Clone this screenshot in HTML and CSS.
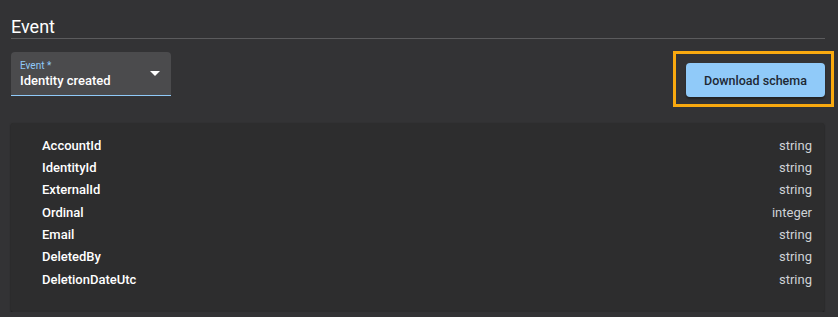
FILE: index.html
```html
<!DOCTYPE html>
<html>
<head>
<meta charset="utf-8">
<link rel="stylesheet" href="styles.css">
</head>
<body>
<div class="page">
  <h2 class="title">Event</h2>
  <div class="divider"></div>
  <div class="toolbar">
    <div class="select">
      <div class="select-text">
        <div class="select-label">Event *</div>
        <div class="select-value">Identity created</div>
      </div>
      <span class="arrow"></span>
    </div>
    <div class="btn-wrap">
      <button class="btn">Download schema</button>
    </div>
  </div>
  <div class="panel">
    <div class="row"><span class="name">AccountId</span><span class="type">string</span></div>
    <div class="row"><span class="name">IdentityId</span><span class="type">string</span></div>
    <div class="row"><span class="name">ExternalId</span><span class="type">string</span></div>
    <div class="row"><span class="name">Ordinal</span><span class="type">integer</span></div>
    <div class="row"><span class="name">Email</span><span class="type">string</span></div>
    <div class="row"><span class="name">DeletedBy</span><span class="type">string</span></div>
    <div class="row"><span class="name">DeletionDateUtc</span><span class="type">string</span></div>
  </div>
</div>
</body>
</html>
```
FILE: styles.css
```css
html, body {
  margin: 0;
  padding: 0;
  background: #333335;
  font-family: Roboto, "Liberation Sans", sans-serif;
  color: #fff;
}
.page {
  padding: 15px 13px 0 11px;
}
.title {
  margin: 0;
  font-size: 18px;
  font-weight: 400;
  line-height: 24px;
  height: 23px;
}
.divider {
  height: 1px;
  background: #5b5b5d;
}
.toolbar {
  margin-top: 13px;
  display: flex;
  justify-content: space-between;
  align-items: flex-start;
}
.select {
  width: 160px;
  height: 43px;
  box-sizing: content-box;
  background: #4b4b4d;
  border-radius: 4px 4px 0 0;
  border-bottom: 1px solid #90caf9;
  display: flex;
  align-items: center;
  justify-content: space-between;
  padding: 0;
}
.select-text {
  padding-left: 9px;
  padding-top: 2px;
}
.select-label {
  font-size: 10px;
  line-height: 12px;
  color: #90caf9;
}
.select-value {
  font-size: 13px;
  font-weight: 500;
  line-height: 17px;
}
.arrow {
  width: 0;
  height: 0;
  border-left: 5px solid transparent;
  border-right: 5px solid transparent;
  border-top: 5px solid #fff;
  margin-right: 11px;
  margin-bottom: 1px;
}
.btn-wrap {
  position: relative;
  margin-top: 11px;
}
.btn-wrap::before {
  content: "";
  position: absolute;
  top: -12px;
  left: -13px;
  right: -9px;
  bottom: -10px;
  border: 3px solid #f9a90f;
  pointer-events: none;
}
.btn {
  display: block;
  width: 139px;
  height: 34px;
  background: #90caf9;
  border: none;
  border-radius: 4px;
  color: #1d2833;
  font-family: Roboto, "Liberation Sans", sans-serif;
  font-size: 12.5px;
  font-weight: 500;
  letter-spacing: 0;
  box-shadow: 0 2px 2px rgba(0,0,0,0.35);
  padding: 0;
}
.panel {
  margin-top: 26px;
  margin-right: 1px;
  background: #2d2d2e;
  box-shadow: 0 1px 2px rgba(0,0,0,0.6);
  border-radius: 2px;
  padding: 11px 12px 22px 31px;
}
.row {
  display: flex;
  justify-content: space-between;
  align-items: center;
  height: 22.33px;
  font-size: 13px;
}
.name {
  font-weight: 500;
  color: #fff;
}
.type {
  color: #cfd2d6;
}
```
